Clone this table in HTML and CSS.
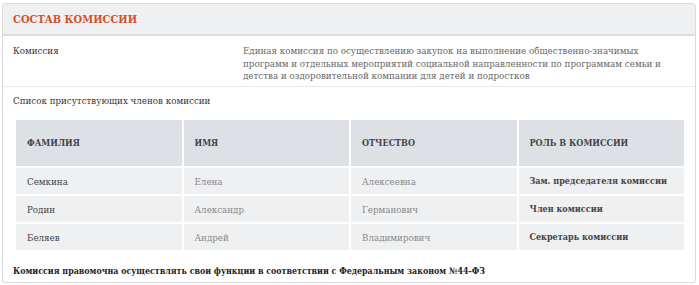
FILE: index.html
```
<!DOCTYPE html>
<html lang="ru">
<head>
<meta charset="utf-8">
<link rel="stylesheet" href="styles.css">
</head>
<body>
<section class="card">
  <header class="card-head"><h2 class="title">СОСТАВ КОМИССИИ</h2></header>
  <div class="row">
    <div class="label">Комиссия</div>
    <div class="value">Единая комиссия по осуществлению закупок на выполнение общественно-значимых программ и отдельных мероприятий социальной направленности по программам семьи и детства и оздоровительной компании для детей и подростков</div>
  </div>
  <div class="members">
    <div class="subtitle">Список присутствующих членов комиссии</div>
    <table class="tbl">
      <thead>
        <tr><th>ФАМИЛИЯ</th><th>ИМЯ</th><th>ОТЧЕСТВО</th><th>РОЛЬ В КОМИССИИ</th></tr>
      </thead>
      <tbody>
        <tr><td class="dark">Семкина</td><td>Елена</td><td>Алексеевна</td><td class="role">Зам. председателя комиссии</td></tr>
        <tr><td class="dark">Родин</td><td>Александр</td><td>Германович</td><td class="role">Член комиссии</td></tr>
        <tr><td class="dark">Беляев</td><td>Андрей</td><td>Владимирович</td><td class="role">Секретарь комиссии</td></tr>
      </tbody>
    </table>
    <p class="note">Комиссия правомочна осуществлять свои функции в соответствии с Федеральным законом №44-ФЗ</p>
  </div>
</section>
</body>
</html>
```
FILE: styles.css
```
html, body { margin: 0; padding: 0; background: #fff; }
body { padding: 3px 3px 0 2px; font-family: "DejaVu Serif", serif; font-stretch: condensed; font-size: 9.7px; color: #333; }
.card { border: 1px solid #d8dade; border-radius: 3px; height: 280px; box-sizing: border-box; box-shadow: 0 1px 1px rgba(0,0,0,0.06); }
.card-head { background: #eef0f2; border-bottom: 2px solid #d9dce0; height: 32px; box-sizing: border-box; display: flex; align-items: center; padding-left: 10px; }
.title { margin: 0; font-size: 11px; font-weight: bold; color: #d5522b; }
.row { display: flex; padding: 9px 10px 0 10px; height: 51px; box-sizing: border-box; border-bottom: 1px solid #e6e8ea; }
.label { width: 230px; color: #333; }
.value { flex: 1; color: #666; line-height: 12.5px; }
.members { padding: 8px 9px 0 10px; }
.subtitle { color: #333; }
.tbl { border-collapse: separate; border-spacing: 2px; width: 672px; table-layout: fixed; margin: 12px 0 0 1px; }
.tbl th { background: #dde1e6; height: 46px; text-align: left; padding: 0 0 0 11px; font-weight: bold; color: #444; font-size: 9px; }
.tbl td { background: #eef0f2; height: 26px; padding: 0 0 0 11px; color: #888; }
.tbl td.dark { color: #444; }
.tbl td.role { color: #444; font-weight: bold; font-size: 9px; }
.note { margin: 14px 0 0 0; font-weight: bold; color: #222; font-size: 8.8px; }
```
